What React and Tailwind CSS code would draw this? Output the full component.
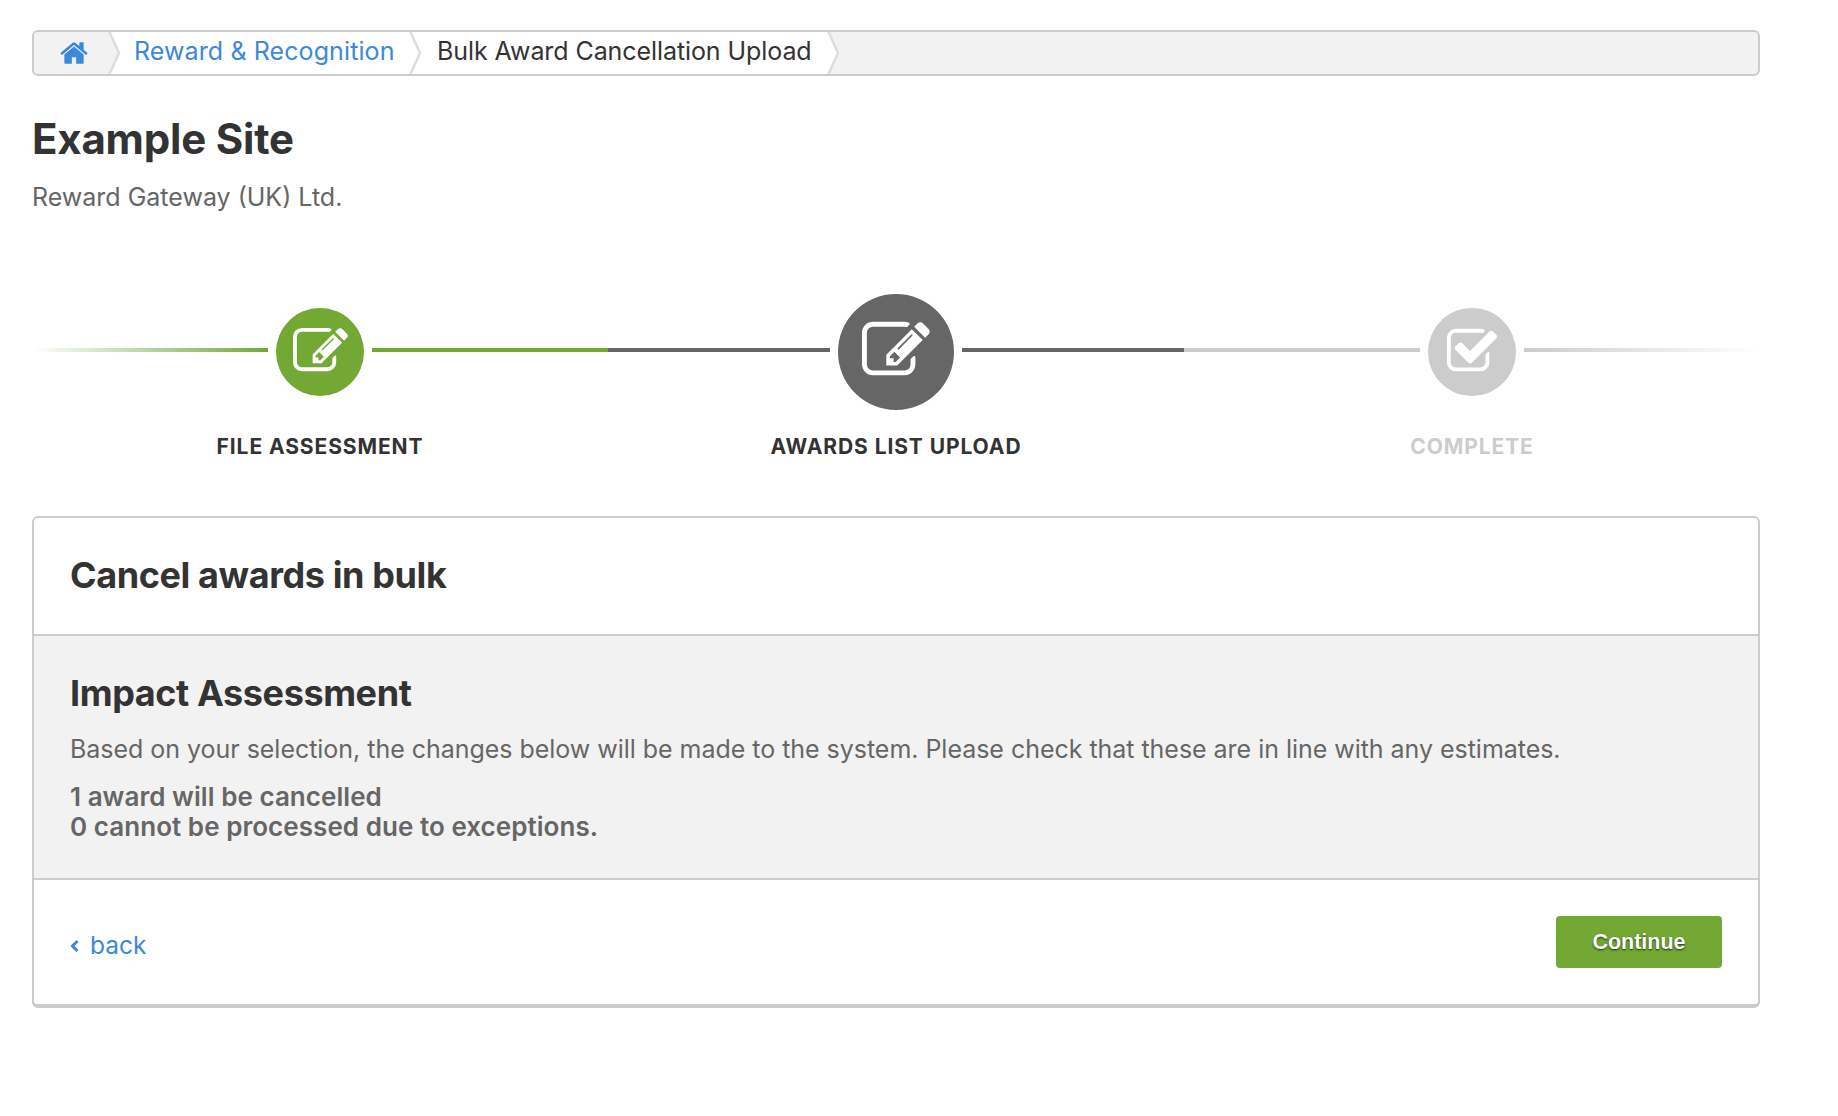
import React from 'react';

const EDIT_PATH = 'M888 1184l116-116-152-152-116 116v56h96v96h56zm440-720q-16-16-33 1l-350 350q-17 17-1 33t33-1l350-350q17-17 1-33zm80 594v190q0 119-84.5 203.5t-203.5 84.5h-832q-119 0-203.5-84.5t-84.5-203.5v-832q0-119 84.5-203.5t203.5-84.5h832q63 0 117 25 15 7 18 23 3 17-9 29l-49 49q-14 14-32 8-23-6-45-6h-832q-66 0-113 47t-47 113v832q0 66 47 113t113 47h832q66 0 113-47t47-113v-126q0-13 9-22l64-64q15-15 35-7t20 29zm-96-738l288 288-672 672h-288v-288zm444 132l-92 92-288-288 92-92q28-28 68-28t68 28l152 152q28 28 28 68t-28 68z';
const CHECK_PATH = 'M1472 930v318q0 119-84.5 203.5t-203.5 84.5h-832q-119 0-203.5-84.5t-84.5-203.5v-832q0-119 84.5-203.5t203.5-84.5h832q63 0 117 25 15 7 18 23 3 17-9 29l-49 49q-10 10-23 10-3 0-9-2-23-6-45-6h-832q-66 0-113 47t-47 113v832q0 66 47 113t113 47h832q66 0 113-47t47-113v-254q0-13 9-22l64-64q10-10 23-10 6 0 12 3 20 8 20 29zm231-489l-814 814q-24 24-57 24t-57-24l-430-430q-24-24-24-57t24-57l110-110q24-24 57-24t57 24l263 263 647-647q24-24 57-24t57 24l110 110q24 24 24 57t-24 57z';
const HOME_PATH = 'M1472 992v480q0 26-19 45t-45 19h-384v-384h-256v384h-384q-26 0-45-19t-19-45v-480q0-1 .5-3t.5-3l575-474 575 474q1 2 1 6zm223-69l-62 74q-8 9-21 11h-3q-13 0-21-7l-692-577-692 577q-12 8-24 7-13-2-21-11l-62-74q-8-10-7-23.5t11-21.5l719-599q32-26 76-26t76 26l244 204v-195q0-14 9-23t23-9h192q14 0 23 9t9 23v408l219 182q10 8 11 21.5t-7 23.5z';

const Glyph = ({ d, className }) => (
  <svg viewBox="0 0 1792 1792" className={className} fill="currentColor">
    <path d={d} />
  </svg>
);

const Chevron = ({ fill }) => (
  <svg viewBox="0 0 13 42" className="absolute top-0 left-[calc(100%-1px)] h-[42px] w-[13px]">
    <polygon points="1,-1 11,21 1,43" fill={fill} />
    <polyline points="1,-1 11,21 1,43" fill="none" stroke="#dddddd" strokeWidth="2.5" />
  </svg>
);

const Step = ({ label, circle, icon, left, right, labelColor }) => (
  <div className="flex-1 flex flex-col items-center">
    <div className="w-full h-[116px] flex items-center gap-2">
      <div className={`flex-1 h-1 -mt-1 ${left}`} />
      <div className={`shrink-0 rounded-full flex items-center justify-center ${circle}`}>{icon}</div>
      <div className={`flex-1 h-1 -mt-1 ${right}`} />
    </div>
    <div className={`mt-[25px] text-[21px] leading-[24px] font-bold tracking-[0.9px] ${labelColor}`}>{label}</div>
  </div>
);

const App = () => {
  return (
    <div className="w-[1838px] h-[1116px] bg-white px-8 pt-[30px] font-['Inter',sans-serif] text-[#333]">
      <div className="w-[1728px] h-[46px] flex items-stretch border-2 border-[#ccc] rounded-md bg-[#f2f2f2] overflow-hidden">
        <div className="relative w-[75px] flex items-center pl-[25px] bg-[#f2f2f2] z-20">
          <Glyph d={HOME_PATH} className="w-[30px] h-[30px] text-[#3b88dc]" />
          <Chevron fill="#f2f2f2" />
        </div>
        <div className="relative w-[301px] flex items-center pl-[25px] bg-white z-10">
          <span className="text-[25px] tracking-[0.1px] text-[#3b88dc] -mt-[3px]">Reward &amp; Recognition</span>
          <Chevron fill="#ffffff" />
        </div>
        <div className="relative w-[418px] flex items-center pl-[27px] bg-white">
          <span className="text-[25px] tracking-[-0.08px] text-[#333] -mt-[3px]">Bulk Award Cancellation Upload</span>
          <Chevron fill="#ffffff" />
        </div>
      </div>

      <h1 className="mt-[39px] text-[42px] leading-[48px] font-bold tracking-[-0.2px]">Example Site</h1>
      <p className="mt-[18px] text-[25px] leading-[32px] text-[#666]">Reward Gateway (UK) Ltd.</p>

      <div className="mt-[81px] w-[1728px] flex">
        <Step
          label="FILE ASSESSMENT"
          circle="w-[88px] h-[88px] bg-[#72a833]"
          icon={<Glyph d={EDIT_PATH} className="w-[55px] h-[55px] -mt-[2px] text-white" />}
          left="bg-linear-to-r from-white to-[#72a833]"
          right="bg-[#72a833]"
          labelColor="text-[#333]"
        />
        <Step
          label="AWARDS LIST UPLOAD"
          circle="w-[116px] h-[116px] bg-[#666]"
          icon={<Glyph d={EDIT_PATH} className="w-[68px] h-[68px] -mt-[2px] text-white" />}
          left="bg-[#666]"
          right="bg-[#666]"
          labelColor="text-[#333]"
        />
        <Step
          label="COMPLETE"
          circle="w-[88px] h-[88px] bg-[#ccc]"
          icon={<Glyph d={CHECK_PATH} className="w-[54px] h-[54px] -mt-[1px] text-white" />}
          left="bg-[#ccc]"
          right="bg-linear-to-r from-[#ccc] to-white"
          labelColor="text-[#ccc]"
        />
      </div>

      <div className="mt-[57px] w-[1728px] border-2 border-b-4 border-[#ccc] rounded-md">
        <div className="h-[116px] flex items-center px-[36px]">
          <h2 className="text-[36px] font-bold tracking-[-0.4px] -mt-[3px]">Cancel awards in bulk</h2>
        </div>
        <div className="h-[246px] border-y-2 border-[#ccc] bg-[#f2f2f2] px-[36px] pt-[35px]">
          <h3 className="text-[36px] leading-[44px] font-bold tracking-[-0.4px]">Impact Assessment</h3>
          <p className="mt-[16px] text-[25px] leading-[36px] tracking-[-0.03px] text-[#666]">
            Based on your selection, the changes below will be made to the system. Please check that these are in line with any estimates.
          </p>
          <p className="mt-[15px] text-[26px] leading-[30px] font-semibold tracking-[0.05px] text-[#666]">
            1 award will be cancelled
            <br />
            0 cannot be processed due to exceptions.
          </p>
        </div>
        <div className="h-[124px] flex items-center justify-between pl-[36px] pr-[36px]">
          <a href="#" className="flex items-center gap-[11px] text-[24.5px] text-[#3b88dc] mt-[7px]">
            <svg viewBox="0 0 9 14" className="w-[9px] h-[14px]" fill="none" stroke="currentColor" strokeWidth="3">
              <polyline points="7.5,2 2.5,7 7.5,12" />
            </svg>
            back
          </a>
          <button className="w-[166px] h-[52px] rounded bg-[#72a833] text-white text-[21.5px] font-bold font-['Liberation_Sans',sans-serif] [text-shadow:0_1px_2px_rgba(0,0,0,0.75)]">
            Continue
          </button>
        </div>
      </div>
    </div>
  );
};

export default App;
